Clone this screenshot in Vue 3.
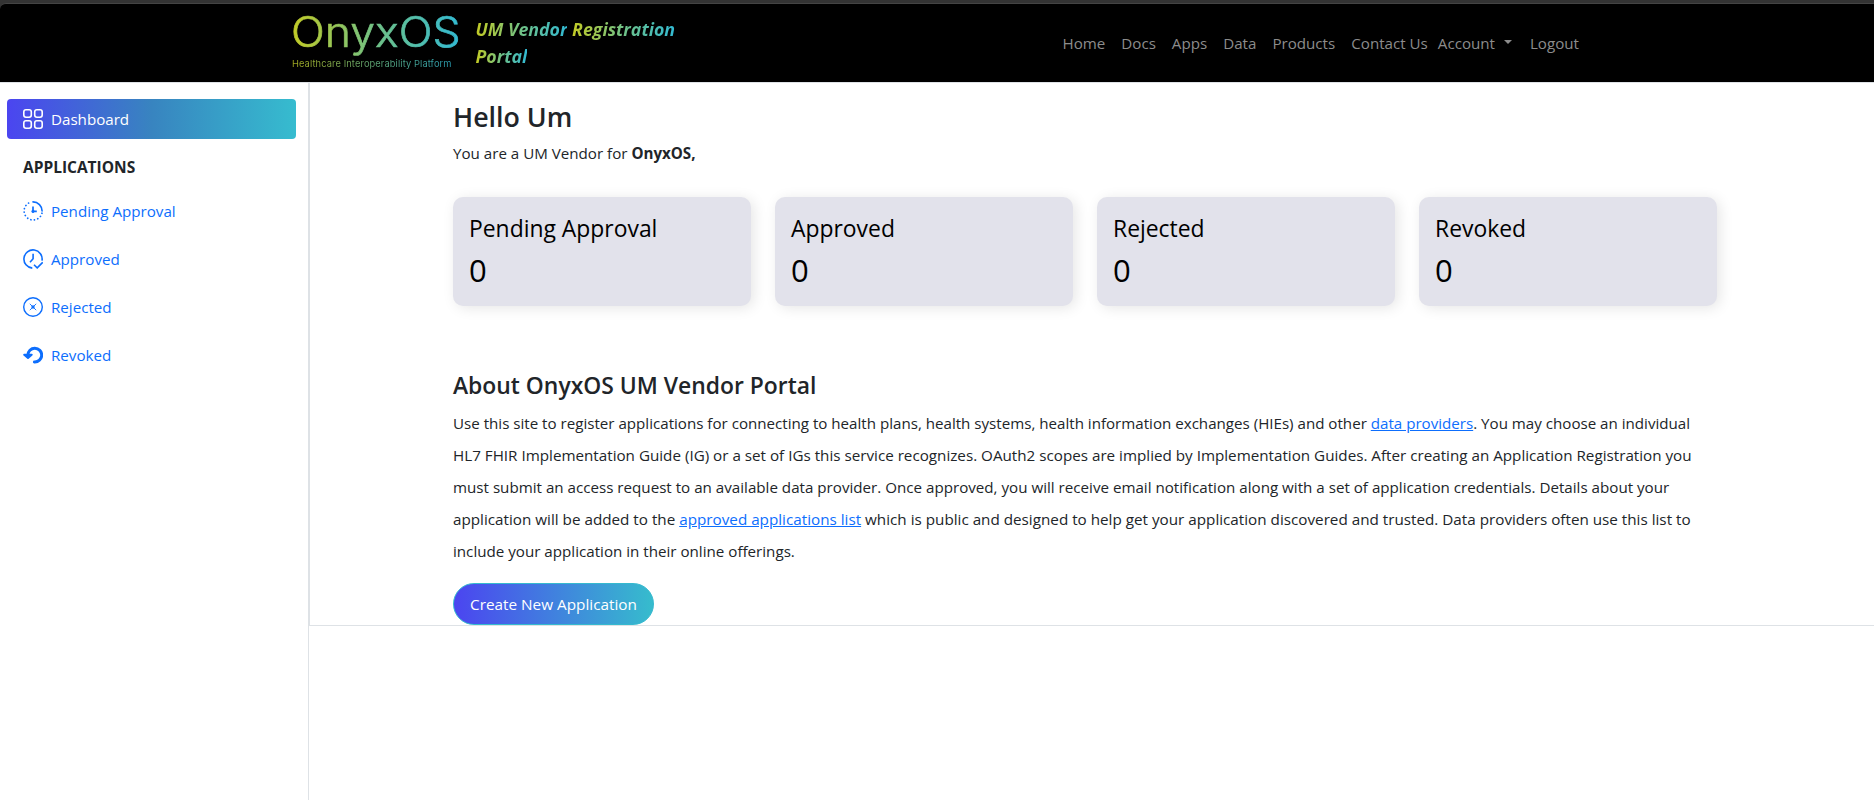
<script setup>
const navLinks = ['Home', 'Docs', 'Apps', 'Data', 'Products', 'Contact Us']
const stats = [
  { label: 'Pending Approval', count: 0 },
  { label: 'Approved', count: 0 },
  { label: 'Rejected', count: 0 },
  { label: 'Revoked', count: 0 },
]
</script>

<template>
  <div class="page">
    <div class="chrome"></div>
    <header class="topbar">
      <div class="logo">
        <div class="word">OnyxOS</div>
        <div class="sub">Healthcare Interoperability Platform</div>
      </div>
      <div class="tagline">
        <span>UM Vendor</span> <span>Registration</span><br /><span>Portal</span>
      </div>
      <nav class="nav">
        <a v-for="link in navLinks" :key="link">{{ link }}</a>
        <a class="account">Account<i class="caret"></i></a>
        <a class="logout">Logout</a>
      </nav>
    </header>

    <div class="body">
      <aside class="sidebar">
        <a class="item active">
          <svg width="20" height="20" viewBox="0 0 20 20" fill="none" stroke="#fff" stroke-width="1.6">
            <rect x="0.8" y="0.8" width="7.5" height="7.5" rx="2.2" />
            <rect x="11.7" y="0.8" width="7.5" height="7.5" rx="2.2" />
            <rect x="0.8" y="11.7" width="7.5" height="7.5" rx="2.2" />
            <rect x="11.7" y="11.7" width="7.5" height="7.5" rx="2.2" />
          </svg>
          <span>Dashboard</span>
        </a>
        <h2 class="group">APPLICATIONS</h2>
        <a class="item">
          <svg width="20" height="20" viewBox="0 0 20 20" fill="none" stroke="#0d6efd" stroke-linecap="round">
            <path d="M10 .9A9.1 9.1 0 0 1 19.1 10" stroke-width="1.6" />
            <path d="M19 12.2A9.1 9.1 0 1 1 8 1.1" stroke-width="1.7" stroke-dasharray="0.1 3.45" />
            <path d="M10 5.4V10.4H13.8" stroke-width="1.7" stroke-linecap="butt" />
            <circle cx="10" cy="10.4" r="1.3" fill="#0d6efd" stroke-width="0.6" />
          </svg>
          <span>Pending Approval</span>
        </a>
        <a class="item">
          <svg width="20" height="20" viewBox="0 0 20 20" fill="none" stroke="#0d6efd" stroke-width="1.6">
            <path d="M9.3 19.1A9.1 9.1 0 1 1 19 11.6" />
            <path d="M10.1 4.8V9.8L7 13.2" />
            <path d="M11 15.8L14.2 18.9L19.7 13.3" />
          </svg>
          <span>Approved</span>
        </a>
        <a class="item">
          <svg width="20" height="20" viewBox="0 0 20 20" fill="none" stroke="#0d6efd">
            <circle cx="10" cy="10" r="9.3" stroke-width="1.4" />
            <path d="M6.8 6.8L13.2 13.2M13.2 6.8L6.8 13.2" stroke-width="0.9" />
            <circle cx="10" cy="10" r="1.7" fill="#0d6efd" stroke="none" />
          </svg>
          <span>Rejected</span>
        </a>
        <a class="item">
          <svg width="20" height="20" viewBox="0 0 20 20" fill="none" stroke="#0d6efd">
            <path d="M4.9 10.2A6.9 6.9 0 1 1 11.4 17" stroke-width="3" stroke-linecap="round" />
            <path d="M1.2 9.7L5 13L8.7 9.7Z" fill="#0d6efd" stroke-width="2" stroke-linejoin="round" />
          </svg>
          <span>Revoked</span>
        </a>
      </aside>

      <main class="main">
        <h1 class="hello">Hello Um</h1>
        <p class="role">You are a UM Vendor for <strong>OnyxOS,</strong></p>
        <section class="cards">
          <div v-for="s in stats" :key="s.label" class="card">
            <div class="label">{{ s.label }}</div>
            <div class="count">{{ s.count }}</div>
          </div>
        </section>
        <h2 class="about">About OnyxOS UM Vendor Portal</h2>
        <p class="copy">
          <span class="l1">Use this site to register applications for connecting to health plans, health systems, health information exchanges (HIEs) and other <a>data providers</a>. You may choose an individual</span>
          <span class="l2">HL7 FHIR Implementation Guide (IG) or a set of IGs this service recognizes. OAuth2 scopes are implied by Implementation Guides. After creating an Application Registration you</span>
          <span class="l3">must submit an access request to an available data provider. Once approved, you will receive email notification along with a set of application credentials. Details about your</span>
          <span class="l4">application will be added to the <a>approved applications list</a> which is public and designed to help get your application discovered and trusted. Data providers often use this list to</span>
          <span class="l3">include your application in their online offerings.</span>
        </p>
        <button class="create">Create New Application</button>
      </main>
    </div>
  </div>
</template>

<style>
body {
  background: #fff;
}
</style>

<style scoped>
.page {
  height: 800px;
  display: flex;
  flex-direction: column;
  overflow: hidden;
  background: #fff;
  color: #212529;
  font: 15.15px/24px "Open Sans", "Noto Sans", sans-serif;
}
h1,
h2,
p {
  margin: 0;
}
.chrome {
  height: 3px;
  flex: none;
  background: #333;
}
.topbar {
  flex: none;
  box-sizing: border-box;
  height: 79px;
  display: flex;
  align-items: flex-start;
  padding-left: 292px;
  background: #000;
  border-top: 1px solid #444;
  border-top-left-radius: 6px;
  box-shadow: -6px -6px 0 #333;
}
.logo {
  flex: none;
  width: 170px;
  margin-top: 7px;
  white-space: nowrap;
}
.word,
.sub {
  width: max-content;
  background: linear-gradient(90deg, #c3cb25, #70c287 50%, #32bad3);
  background-clip: text;
  color: transparent;
  transform-origin: 0 0;
}
.word {
  margin-left: -1.5px;
  padding-bottom: 6px;
  font: 300 42px/42px Inter, sans-serif;
  -webkit-text-stroke: 0.7px #000;
  -webkit-text-stroke-color: transparent;
  transform: scaleX(1.06);
}
.sub {
  margin-top: -1px;
  font: 400 9.3px/12px Inter, sans-serif;
  letter-spacing: 0.1px;
  opacity: 0.85;
}
.tagline {
  flex: none;
  width: 587px;
  margin: 12px 0 0 13.5px;
  font-size: 17.75px;
  font-weight: 700;
  font-style: italic;
  line-height: 27px;
}
.tagline span {
  background: linear-gradient(90deg, #c3cb25, #70c287 50%, #32bad3);
  background-clip: text;
  color: transparent;
}
.nav {
  display: flex;
  gap: 16px;
  margin-top: 27px;
  white-space: nowrap;
  color: #8c8c8c;
}
.account {
  display: flex;
  margin-left: -6px;
}
.caret {
  margin: 9px 2px 0 9px;
  border: 4.5px solid transparent;
  border-top-color: #8c8c8c;
  border-bottom: 0;
  height: 0;
}
.body {
  flex: 1;
  display: flex;
  border-top: 1px solid #dee2e6;
}
.sidebar {
  box-sizing: border-box;
  width: 309px;
  flex: none;
  padding: 16px 12px 0 7px;
  border-right: 1px solid #dee2e6;
}
.item {
  display: flex;
  align-items: center;
  gap: 8px;
  height: 40px;
  padding-left: 16px;
  margin-bottom: 8px;
  color: #0d6efd;
}
.active {
  color: #fff;
  border-radius: 4px;
  background: linear-gradient(90deg, #4b45f0, #3884c0 50%, #36bccf);
}
.group {
  height: 40px;
  margin-bottom: 4px;
  padding-left: 16px;
  font-size: 15.5px;
  font-weight: 700;
  line-height: 40px;
}
.main {
  flex: 1;
  box-sizing: border-box;
  height: 543px;
  padding: 17px 0 0 143px;
  border-left: 1px solid #dee2e6;
  border-bottom: 1px solid #dee2e6;
}
.hello {
  font-size: 26.8px;
  font-weight: 600;
  line-height: 34px;
}
.role {
  margin-top: 7px;
}
.cards {
  display: grid;
  grid-template-columns: repeat(4, 298px);
  gap: 24px;
  margin-top: 32px;
}
.card {
  box-sizing: border-box;
  height: 109px;
  padding: 18px 16px 0;
  border-radius: 10px;
  background: #e2e2eb;
  color: #000;
  box-shadow: 3px 2px 14px rgba(0, 0, 0, 0.1);
}
.label {
  font-size: 22.9px;
  line-height: 28px;
}
.count {
  margin-top: 9px;
  font-size: 31px;
  line-height: 36px;
}
.about {
  margin-top: 66px;
  font-size: 22.88px;
  font-weight: 600;
  line-height: 28px;
}
.copy {
  margin-top: 7px;
  line-height: 32px;
  white-space: nowrap;
}
.copy span {
  display: block;
}
.copy a {
  color: #0d6efd;
  text-decoration: underline;
}
.l1 {
  font-size: 15.13px;
}
.l2 {
  font-size: 15.21px;
}
.l3 {
  font-size: 15.16px;
}
.l4 {
  font-size: 15.24px;
}
.create {
  display: block;
  width: 201px;
  height: 42px;
  margin-top: 16px;
  padding: 0;
  border: 1px solid #35b9cf;
  border-radius: 21px;
  background: linear-gradient(90deg, #4b45f0, #36bccd);
  color: #fff;
  font: 15.3px/24px "Open Sans", "Noto Sans", sans-serif;
}
</style>
